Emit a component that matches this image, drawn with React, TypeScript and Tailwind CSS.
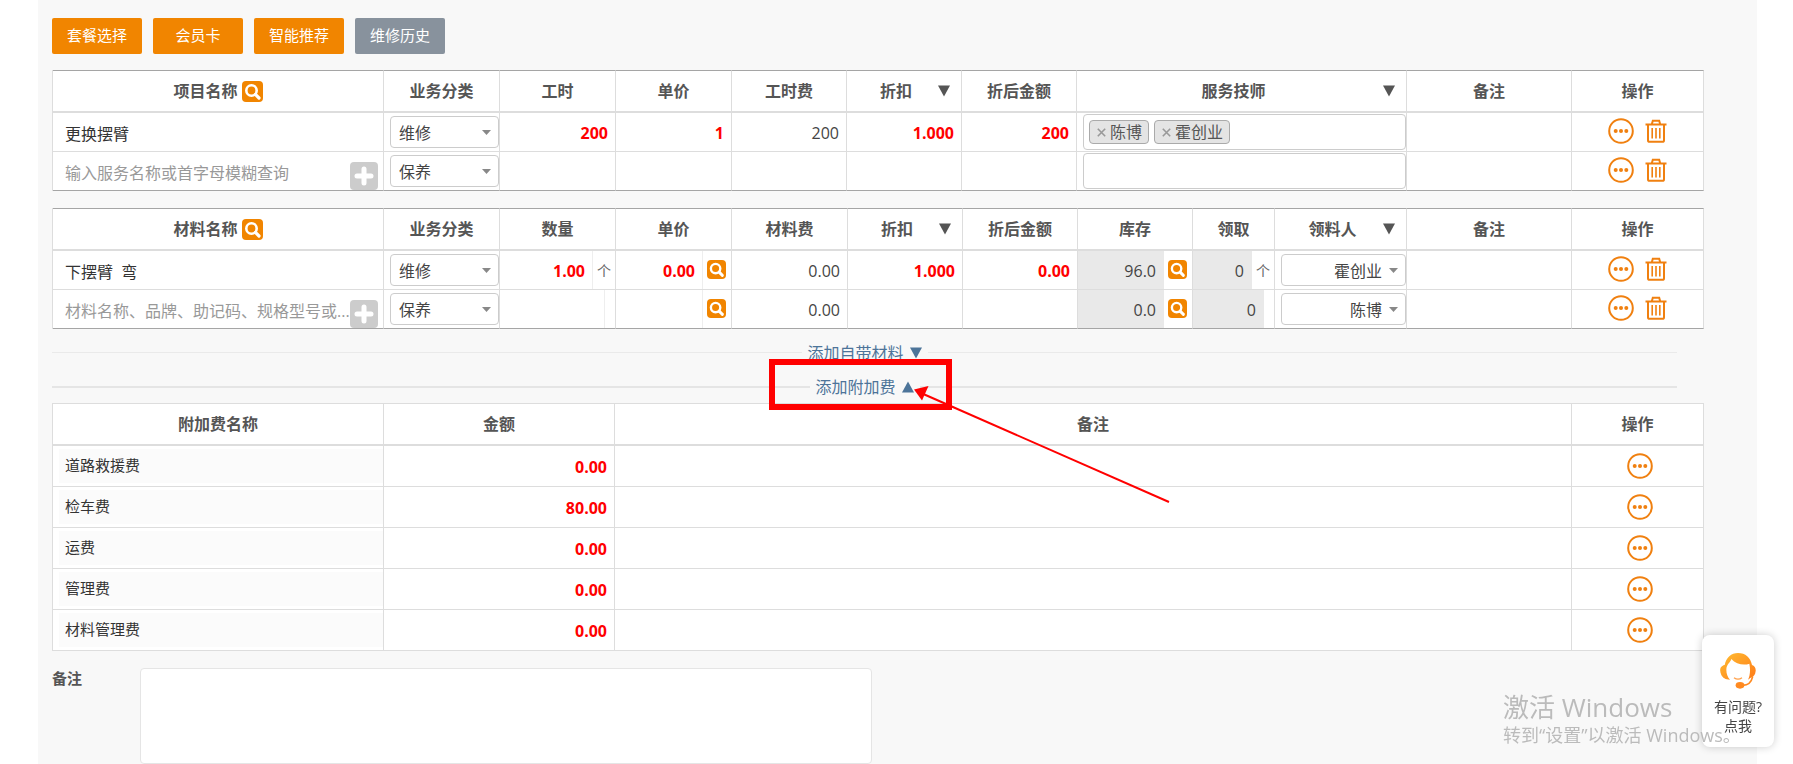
import { ReactNode } from 'react'
import clsx from 'clsx'

type TAction = { withDelete?: boolean }

type TNumberField = {
  label: string
  value?: string
}

const FEES = [
  { name: '道路救援费', amount: '0.00' },
  { name: '检车费', amount: '80.00' },
  { name: '运费', amount: '0.00' },
  { name: '管理费', amount: '0.00' },
  { name: '材料管理费', amount: '0.00' }
]

const CATEGORIES = ['维修', '保养']
const STAFF = ['霍创业', '陈博']

function SearchButton({ label, large }: { label: string; large?: boolean }) {
  return (
    <button
      type="button"
      aria-label={label}
      className={clsx(
        'shrink-0 rounded bg-[#f18500] text-white',
        large ? 'size-[21px]' : 'size-[19px]'
      )}
    >
      <svg viewBox="0 0 21 21" fill="none" stroke="currentColor">
        <circle cx="9.5" cy="9.5" r="5.2" strokeWidth="2.6" />
        <path d="M13.4 13.4 17 17" strokeWidth="3.2" strokeLinecap="round" />
      </svg>
    </button>
  )
}

function PlusButton({ label }: { label: string }) {
  return (
    <button
      type="button"
      aria-label={label}
      className="size-7 shrink-0 rounded bg-[#ccc] text-white"
    >
      <svg viewBox="0 0 28 28" fill="none" stroke="currentColor">
        <path d="M14 7v14M7 14h14" strokeWidth="5" strokeLinecap="round" />
      </svg>
    </button>
  )
}

function RowActions({ withDelete }: TAction) {
  return (
    <div
      className={clsx(
        'flex items-center justify-center gap-[11px] text-[#f08010]',
        withDelete ? 'pb-0.5' : 'pl-1'
      )}
    >
      <button type="button" aria-label="更多">
        <svg className="size-[26px]" viewBox="0 0 26 26" fill="none">
          <circle cx="13" cy="13" r="11.8" stroke="currentColor" strokeWidth="2" />
          <g fill="currentColor">
            <circle cx="7.7" cy="13" r="2" />
            <circle cx="13" cy="13" r="2" />
            <circle cx="18.3" cy="13" r="2" />
          </g>
        </svg>
      </button>
      {withDelete && (
        <button type="button" aria-label="删除">
          <svg
            className="h-6 w-[22px]"
            viewBox="0 0 22 24"
            fill="none"
            stroke="currentColor"
            strokeWidth="2"
          >
            <path d="M.5 5.6h21M6.8 5.2l1-3.4h6.4l1 3.4M3 5.8v15.4q0 1.6 1.6 1.6h12.8q1.6 0 1.6-1.6V5.8" />
            <path d="M7.2 9v10.4M11 9v10.4M14.8 9v10.4" strokeWidth="1.6" />
          </svg>
        </button>
      )}
    </div>
  )
}

function SelectBox({
  label,
  value,
  options,
  alignEnd
}: {
  label: string
  value: string
  options: string[]
  alignEnd?: boolean
}) {
  return (
    <div className="relative ml-1.5">
      <select
        aria-label={label}
        defaultValue={value}
        className={clsx(
          'block h-8 w-full appearance-none rounded border border-[#ccc] bg-white pt-0.5 text-base leading-6 text-[#444]',
          alignEnd ? 'pr-[23px] [text-align-last:right]' : 'pl-2'
        )}
      >
        {options.map(option => (
          <option key={option}>{option}</option>
        ))}
      </select>
      <svg
        className="pointer-events-none absolute top-3.5 right-2 h-[5px] w-[9px] fill-[#888]"
        viewBox="0 0 9 5"
      >
        <path d="M0 0h9L4.5 5z" />
      </svg>
    </div>
  )
}

function NumberField({ label, value }: TNumberField) {
  return (
    <input
      aria-label={label}
      defaultValue={value}
      className="block h-[38px] w-full min-w-0 flex-1 bg-transparent pt-0.5 pr-[7px] text-right font-bold text-[#f00] outline-none"
    />
  )
}

function Th({ children, sortable }: { children: ReactNode; sortable?: boolean }) {
  return (
    <th className="h-[43px] border-t border-r border-b-2 border-[#ddd] p-0 font-bold text-[#555] group-data-[frame=dark]:border-t-[#a5a5a5]">
      {sortable ? (
        <span className="flex items-center pr-[11px]">
          <span className="flex-1 pl-[7px]">{children}</span>
          <Triangle />
        </span>
      ) : (
        <span className="flex items-center justify-center gap-1">{children}</span>
      )}
    </th>
  )
}

function Td({ children }: { children?: ReactNode }) {
  return (
    <td className="h-[39px] border-r border-b border-[#ddd] p-0 group-data-[frame=dark]:group-last/row:border-b-[#a5a5a5]">
      {children}
    </td>
  )
}

function Triangle({ up }: { up?: boolean }) {
  return (
    <svg className="size-3 shrink-0" viewBox="0 0 12 12" fill="currentColor">
      <path d={up ? 'M0 11.5h12L6 .5z' : 'M0 .5h12L6 11.5z'} />
    </svg>
  )
}

function Table({
  widths,
  head,
  children,
  dark
}: {
  widths: number[]
  head: ReactNode
  children: ReactNode
  dark?: boolean
}) {
  return (
    <table
      data-frame={dark ? 'dark' : 'light'}
      className="group w-full table-fixed border-separate border-spacing-0 border-l border-[#ddd] bg-white"
    >
      <colgroup>
        {widths.map((width, i) => (
          <col key={i} style={{ width }} />
        ))}
      </colgroup>
      <thead>
        <tr>{head}</tr>
      </thead>
      <tbody>{children}</tbody>
    </table>
  )
}

function ReadOnlyNumber({ children }: { children: ReactNode }) {
  return <div className="pt-0.5 pr-[7px] text-right text-[#444]">{children}</div>
}

function Tag({ children }: { children: ReactNode }) {
  return (
    <span className="flex h-6 items-center gap-1 rounded border border-[#aaa] bg-[#e4e4e4] pr-1.5 pl-[7px] text-[#555]">
      <button type="button" aria-label="移除" className="text-[#999]">
        <svg className="size-[9px]" viewBox="0 0 9 9" stroke="currentColor" strokeWidth="1.6">
          <path d="m.8.8 7.4 7.4M8.2.8.8 8.2" />
        </svg>
      </button>
      <span>{children}</span>
    </span>
  )
}

function ServiceTable() {
  return (
    <Table
      dark
      widths={[331, 116, 116, 116, 115, 115, 115, 330, 165, 132]}
      head={
        <>
          <Th>
            项目名称
            <SearchButton large label="查询项目" />
          </Th>
          <Th>业务分类</Th>
          <Th>工时</Th>
          <Th>单价</Th>
          <Th>工时费</Th>
          <Th sortable>折扣</Th>
          <Th>折后金额</Th>
          <Th sortable>服务技师</Th>
          <Th>备注</Th>
          <Th>操作</Th>
        </>
      }
    >
      <tr className="group/row">
        <Td>
          <div className="pt-1 pl-3 text-[#333]">更换摆臂</div>
        </Td>
        <Td>
          <SelectBox label="业务分类" value="维修" options={CATEGORIES} />
        </Td>
        <Td>
          <NumberField label="工时" value="200" />
        </Td>
        <Td>
          <NumberField label="单价" value="1" />
        </Td>
        <Td>
          <ReadOnlyNumber>200</ReadOnlyNumber>
        </Td>
        <Td>
          <NumberField label="折扣" value="1.000" />
        </Td>
        <Td>
          <NumberField label="折后金额" value="200" />
        </Td>
        <Td>
          <div className="ml-1.5 flex h-9 items-center gap-[5px] rounded border border-[#ccc] px-[5px]">
            <Tag>陈博</Tag>
            <Tag>霍创业</Tag>
          </div>
        </Td>
        <Td />
        <Td>
          <RowActions withDelete />
        </Td>
      </tr>
      <tr className="group/row">
        <Td>
          <div className="flex h-[38px] items-end pr-[5px] pl-3">
            <input
              aria-label="项目名称"
              placeholder="输入服务名称或首字母模糊查询"
              className="h-[34px] min-w-0 flex-1 outline-none placeholder:text-[#999]"
            />
            <PlusButton label="新增项目" />
          </div>
        </Td>
        <Td>
          <SelectBox label="业务分类" value="保养" options={CATEGORIES} />
        </Td>
        <Td />
        <Td />
        <Td />
        <Td />
        <Td />
        <Td>
          <div className="ml-1.5 h-9 rounded border border-[#ccc]" />
        </Td>
        <Td />
        <Td>
          <RowActions withDelete />
        </Td>
      </tr>
    </Table>
  )
}

type TMaterialRow = {
  name: ReactNode
  category: string
  quantity?: string
  unit?: string
  price?: string
  discount?: string
  total?: string
  stock: string
  taker: string
}

function MaterialRow({
  name,
  category,
  quantity,
  unit,
  price,
  discount,
  total,
  stock,
  taker
}: TMaterialRow) {
  return (
    <tr className="group/row">
      <Td>{name}</Td>
      <Td>
        <SelectBox label="业务分类" value={category} options={CATEGORIES} />
      </Td>
      <Td>
        <div className="flex h-[38px]">
          <NumberField label="数量" value={quantity} />
          <span
            className={clsx(
              'border-l border-[#eee] pt-2.5 text-center text-sm text-[#666]',
              unit ? 'w-[23px]' : 'w-[11px]'
            )}
          >
            {unit}
          </span>
        </div>
      </Td>
      <Td>
        <div className="flex h-[38px]">
          <NumberField label="单价" value={price} />
          <span className="flex w-[29px] items-center border-l border-[#eee] pb-0.5 pl-1">
            <SearchButton label="查询价格" />
          </span>
        </div>
      </Td>
      <Td>
        <ReadOnlyNumber>0.00</ReadOnlyNumber>
      </Td>
      <Td>
        {discount && <NumberField label="折扣" value={discount} />}
      </Td>
      <Td>
        {total && <NumberField label="折后金额" value={total} />}
      </Td>
      <Td>
        <div className="flex h-[38px] pr-[5px]">
          <span className="mr-1 flex-1 bg-[#e9e9e9] pt-2.5 pr-2 text-right text-[#444]">
            {stock}
          </span>
          <span className="flex items-center pb-0.5">
            <SearchButton label="查询库存" />
          </span>
        </div>
      </Td>
      <Td>
        <div className="flex h-[38px]">
          <span className="flex-1 bg-[#e9e9e9] pt-2.5 pr-2 text-right text-[#444]">0</span>
          <span
            className={clsx(
              'pt-2.5 text-center text-sm text-[#666]',
              unit ? 'w-[22px]' : 'w-[10px]'
            )}
          >
            {unit}
          </span>
        </div>
      </Td>
      <Td>
        <SelectBox alignEnd label="领料人" value={taker} options={STAFF} />
      </Td>
      <Td />
      <Td>
        <RowActions withDelete />
      </Td>
    </tr>
  )
}

function MaterialTable() {
  return (
    <Table
      dark
      widths={[331, 116, 116, 116, 116, 115, 115, 115, 82, 132, 165, 132]}
      head={
        <>
          <Th>
            材料名称
            <SearchButton large label="查询材料" />
          </Th>
          <Th>业务分类</Th>
          <Th>数量</Th>
          <Th>单价</Th>
          <Th>材料费</Th>
          <Th sortable>折扣</Th>
          <Th>折后金额</Th>
          <Th>库存</Th>
          <Th>领取</Th>
          <Th sortable>领料人</Th>
          <Th>备注</Th>
          <Th>操作</Th>
        </>
      }
    >
      <MaterialRow
        name={<div className="pt-1 pl-3 whitespace-pre text-[#333]">{'下摆臂  弯'}</div>}
        category="维修"
        quantity="1.00"
        unit="个"
        price="0.00"
        discount="1.000"
        total="0.00"
        stock="96.0"
        taker="霍创业"
      />
      <MaterialRow
        name={
          <div className="flex h-[38px] items-end pr-[5px] pl-3">
            <input
              aria-label="材料名称"
              placeholder="材料名称、品牌、助记码、规格型号或..."
              className="h-[34px] min-w-0 flex-1 outline-none placeholder:text-[#999]"
            />
            <PlusButton label="新增材料" />
          </div>
        }
        category="保养"
        stock="0.0"
        taker="陈博"
      />
    </Table>
  )
}

function FeeTable() {
  return (
    <Table
      widths={[331, 231, 957, 132]}
      head={
        <>
          <Th>附加费名称</Th>
          <Th>金额</Th>
          <Th>备注</Th>
          <Th>操作</Th>
        </>
      }
    >
      {FEES.map(({ name, amount }) => (
        <tr key={name} className="group/row h-[41px]">
          <Td>
            <div className="ml-1.5 h-[34px] bg-[#fbfbfb] pl-1.5 text-[15px] leading-8 text-[#333]">
              {name}
            </div>
          </Td>
          <Td>
            <NumberField label={name} value={amount} />
          </Td>
          <Td />
          <Td>
            <RowActions />
          </Td>
        </tr>
      ))}
    </Table>
  )
}

function SectionToggle({
  children,
  open,
  overlay
}: {
  children: ReactNode
  open?: boolean
  overlay?: ReactNode
}) {
  return (
    <div
      className={clsx(
        'mr-[27px] flex items-center text-[#4d7499]',
        open ? 'h-[33px]' : 'h-[35px]'
      )}
    >
      <span
        className={clsx('flex-1', open ? 'h-0.5 bg-[#e5e5e5]' : 'h-px bg-[#eaeaea]')}
      />
      <div className="relative">
        <button type="button" className="flex items-center gap-1.5 px-1.5">
          {children}
          <Triangle up={open} />
        </button>
        {overlay}
      </div>
      <span
        className={clsx('flex-1', open ? 'h-0.5 bg-[#e5e5e5]' : 'h-px bg-[#eaeaea]')}
      />
    </div>
  )
}

function Callout() {
  return (
    <svg
      aria-hidden="true"
      className="pointer-events-none absolute -top-[18px] -left-[41px] z-10 h-[146px] w-[404px]"
      viewBox="0 0 404 146"
      fill="none"
      stroke="#f00"
    >
      <rect x="3" y="3" width="177" height="45" strokeWidth="6" />
      <path d="M152 34 400 143" strokeWidth="2" />
      <path d="M145 30.500l14.500-3.500-6.500 14.500z" fill="#f00" stroke="none" />
    </svg>
  )
}

function HelpCard() {
  return (
    <button
      type="button"
      className="fixed right-[19px] bottom-[17px] flex h-28 w-[72px] flex-col items-center rounded-lg bg-white pt-[18px] text-sm leading-[19px] text-[#444] shadow-[0_0_8px_rgba(0,0,0,0.2)]"
    >
      <svg className="mb-2 size-9" viewBox="0 0 108 108" fill="none">
        <defs>
          <linearGradient id="hair" x1="0" y1="0" x2="1" y2="1">
            <stop offset="0" stopColor="#ffbe32" />
            <stop offset="1" stopColor="#ff7a18" />
          </linearGradient>
        </defs>
        <path
          fill="url(#hair)"
          d="M14 36C18 14 34 0 54 0c22 0 38 14 42 36 8 2 12 10 11 18-1 12-7 18-15 20l-8 6c6-10 8-30 4-48-16 6-40 2-54-14-2 10-15 16-15 32 0 12 4 22 11 30-14 0-22-6-26-14-5-10-5-22 2-26 3-3 6-4 8-4z"
        />
        <path d="M42 74q12 9 24 0" stroke="#ffa04a" strokeWidth="4" />
        <path d="M68 97c16 0 26-8 30-26" stroke="#ff8a20" strokeWidth="5" />
        <ellipse cx="60" cy="97" rx="13" ry="10" fill="#ff8a20" />
      </svg>
      <span>有问题?</span>
      <span>点我</span>
    </button>
  )
}

export default function App() {
  return (
    <div className="bg-white font-['Open_Sans','Noto_Sans_CJK_SC',sans-serif] text-base leading-5">
      <main className="mr-9 ml-[38px] min-h-screen bg-[#f8f8f8] pt-[18px] pr-[53px] pl-3.5">
        <div className="mb-4 flex gap-[11px] text-[15px] text-white">
          <button type="button" className="h-9 w-[90px] rounded-xs bg-[#f18500] pb-0.5">
            套餐选择
          </button>
          <button type="button" className="h-9 w-[90px] rounded-xs bg-[#f18500] pb-0.5">
            会员卡
          </button>
          <button type="button" className="h-9 w-[90px] rounded-xs bg-[#f18500] pb-0.5">
            智能推荐
          </button>
          <button type="button" className="h-9 w-[90px] rounded-xs bg-[#88929d] pb-0.5">
            维修历史
          </button>
        </div>

        <ServiceTable />
        <div className="mt-[17px] mb-1.5">
          <MaterialTable />
        </div>

        <SectionToggle>添加自带材料</SectionToggle>
        <SectionToggle open overlay={<Callout />}>
          添加附加费
        </SectionToggle>
        <FeeTable />

        <div className="mt-[17px] flex">
          <label htmlFor="remark" className="w-[88px] text-[15px] font-bold text-[#555]">
            备注
          </label>
          <textarea
            id="remark"
            className="block h-24 w-[732px] resize-none rounded border border-[#e5e5e5] bg-white"
          />
        </div>
      </main>

      <HelpCard />
      <div className="pointer-events-none fixed right-[50px] bottom-[17px] w-60 whitespace-nowrap text-[#bbb]">
        <p className="text-[26px] leading-8">激活 Windows</p>
        <p className="text-lg leading-6">转到“设置”以激活 Windows。</p>
      </div>
    </div>
  )
}
